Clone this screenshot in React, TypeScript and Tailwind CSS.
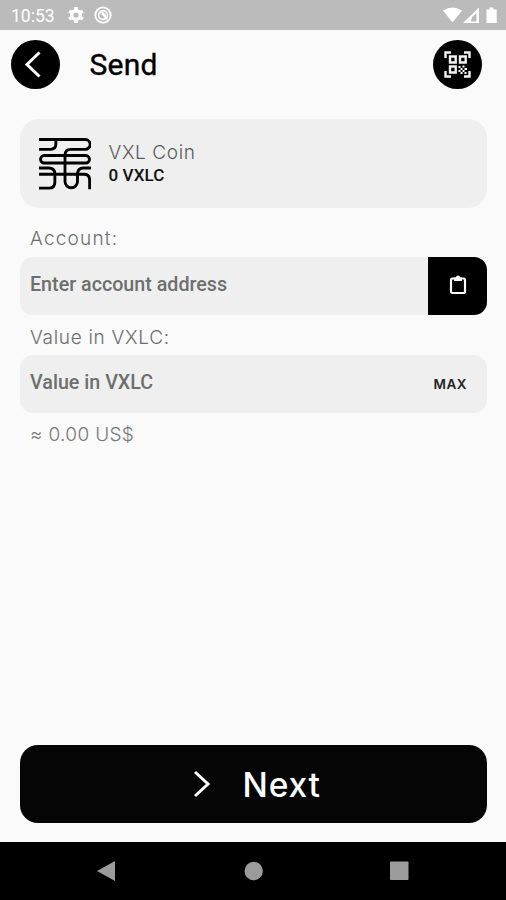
import React from "react";

const LIGHT = "font-['Inter','Liberation_Sans',sans-serif] font-light";

function StatusBar() {
  return (
    <div className="flex h-[30px] items-center bg-[#bbbbbb] pl-[11px] pr-[7px] text-white">
      <span className="w-[57px] pt-px text-[17.5px] leading-[30px]">10:53</span>
      <svg width="16" height="18" viewBox="0 0 16 18" fill="none" stroke="currentColor">
        <circle cx="8" cy="9" r="4.300" strokeWidth="3.400" />
        <g strokeWidth="3.600">
          <path d="M8 1v3M8 14v3M1.100 5l2.600 1.500M12.300 11.500l2.600 1.500M14.900 5l-2.600 1.500M3.700 11.500L1.100 13" />
        </g>
      </svg>
      <svg className="ml-[10px]" width="18" height="18" viewBox="0 0 18 18" fill="none" stroke="currentColor">
        <circle cx="9" cy="9" r="7.700" strokeWidth="1.800" />
        <circle cx="9" cy="9" r="4.400" strokeWidth="1.600" />
        <path d="M5 7.500q3-2 4.500 0t4 4M8 8l5.500 5.500" strokeWidth="1.400" />
      </svg>
      <svg className="ml-auto" width="56" height="18" viewBox="0 0 56 18" fill="currentColor">
        <path d="M0 4.500Q9.500-1.500 19 4.500L9.500 16.500Z" />
        <path fillRule="evenodd" d="M20 17L36 1.500V17ZM28 15.500H33.500V7.500Q28 10 28 15.500Z" />
        <path d="M43.500 3.500h3V1.500h4v2h3.200V17H43.500Z" />
      </svg>
    </div>
  );
}

function Header() {
  return (
    <header className="flex h-[69px] items-center pl-[10.5px] pr-6">
      <button className="flex size-[49px] items-center justify-center rounded-full bg-black">
        <svg width="49" height="49" viewBox="0 0 49 49" fill="none" stroke="white" strokeWidth="3">
          <path d="M28.500 12.500L16 24.500L28.500 36.500" />
        </svg>
      </button>
      <h1 className="ml-[30px] text-[30px] font-normal leading-9 tracking-[0.25px] text-black [-webkit-text-stroke:0.35px_black]">Send</h1>
      <button className="ml-auto flex size-[49px] items-center justify-center rounded-full bg-black">
        <svg width="27" height="27" viewBox="0 0 27 27" fill="none" stroke="#f2f2f2" strokeWidth="2.400">
          <path d="M1.500 7V1.500H7M20 1.500h5.500V7M1.500 20v5.500H7M20 25.500h5.500V20" />
          <path d="M6 5.500h5.700v6H6ZM16 5.500h5.700v6H16ZM6 15.500h5.700v6H6Z" />
          <g fill="white" stroke="none">
            <path d="M14.500 15h2v2h-2zM18.500 14.500h2v2h-2zM16.500 17h2v2h-2zM20.500 17h2.500v2h-2.500zM14.500 19h2v2h-2zM18.500 19h2v2h-2zM16.500 21h2v2h-2zM20.500 21h2v2h-2z" />
          </g>
        </svg>
      </button>
    </header>
  );
}

function CoinLogo() {
  return (
    <svg width="52" height="52" viewBox="27 25 154 154" fill="none" stroke="black" strokeWidth="8.500">
      <path d="M27 29.500H164a14.500 14.500 0 0 1 0 29H121Q104 58.500 104 76V154a18.500 18.500 0 0 0 37 0V133Q141 114 159 114H181" />
      <path d="M77 30V43Q77 58.500 61 58.500H27" />
      <rect x="31.500" y="77" width="145" height="22" rx="11" />
      <path d="M27 114H56Q74 114 74 132V156Q74 173.500 56 173.500H27" />
      <path d="M27 132.500H160Q177 132.500 177 150V177" />
    </svg>
  );
}

export default function App() {
  return (
    <div className="flex h-[900px] w-[506px] flex-col overflow-hidden bg-[#fafafa] font-['Roboto','Liberation_Sans',sans-serif]">
      <StatusBar />
      <Header />
      <main className="flex flex-1 flex-col px-5 pt-5">
        <section className="flex h-[89px] w-[467px] items-center rounded-[19px] bg-[#efefef] pl-[18.500px]">
          <CoinLogo />
          <div className="ml-[18px]">
            <p className={`${LIGHT} text-[19px] leading-[24px] tracking-[0.6px] text-[#5a5a5a]`}>VXL Coin</p>
            <p className="text-[17px] font-medium leading-[21px] tracking-[0.1px] text-[#101010]">0 VXLC</p>
          </div>
        </section>
        <label className={`${LIGHT} mt-[17px] h-8 pl-[10px] text-[19px] leading-[28px] tracking-[1.200px] text-[#6c6c6c]`}>Account:</label>
        <div className="flex h-[58px] w-[467px] overflow-hidden rounded-[13px] bg-[#efefef]">
          <span className="flex-1 pl-[10px] text-[19.700px] font-medium leading-[56px] text-[#6b6f6d]">Enter account address</span>
          <button className="flex w-[59px] items-center justify-center bg-black pb-[2px]">
            <svg width="18" height="20" viewBox="0 0 18 20" fill="none" stroke="white" strokeWidth="2.200">
              <rect x="2" y="3.500" width="14" height="14.500" rx="1.500" />
              <path d="M5 2.500h2a2 2 0 0 1 4 0h2V6H5Z" fill="white" stroke="none" />
            </svg>
          </button>
        </div>
        <label className={`${LIGHT} mt-2 h-8 pl-[10px] pt-px text-[19px] leading-[28px] tracking-[0.700px] text-[#6c6c6c]`}>Value in VXLC:</label>
        <div className="flex h-[58px] w-[467px] justify-between rounded-[13px] bg-[#efefef] pl-[10px] pr-5">
          <span className="text-[19.700px] font-medium leading-[56px] text-[#6b6f6d]">Value in VXLC</span>
          <button className="font-['Inter',sans-serif] text-[13.500px] font-semibold leading-[58px] tracking-[0.5px] text-[#222]">MAX</button>
        </div>
        <p className={`${LIGHT} mt-[8px] pl-[10px] text-[19px] leading-[28px] tracking-[0.350px] text-[#777]`}>≈ 0.00 US$</p>
        <button className="mb-[19px] mt-auto flex h-[78px] w-[467px] items-center rounded-[18px] bg-[#050505] pl-[173px] text-white">
          <svg width="18" height="28" viewBox="0 0 18 28" fill="none" stroke="currentColor" strokeWidth="3">
            <path d="M2 2L15 14L2 26" />
          </svg>
          <span className="ml-[31.500px] pt-px font-['Inter',sans-serif] text-[33.500px] font-medium leading-10 tracking-[0.800px]">Next</span>
        </button>
      </main>
      <nav className="flex h-[58px] items-center bg-black pl-[97px] pr-[97px]">
        <svg width="312" height="22" viewBox="0 0 312 22" fill="#9b9b9b">
          <path d="M0 11L18 1V21Z" />
          <circle cx="156.700" cy="11" r="9.200" />
          <rect x="293" y="1.500" width="18.500" height="18.500" rx="0.800" />
        </svg>
      </nav>
    </div>
  );
}
